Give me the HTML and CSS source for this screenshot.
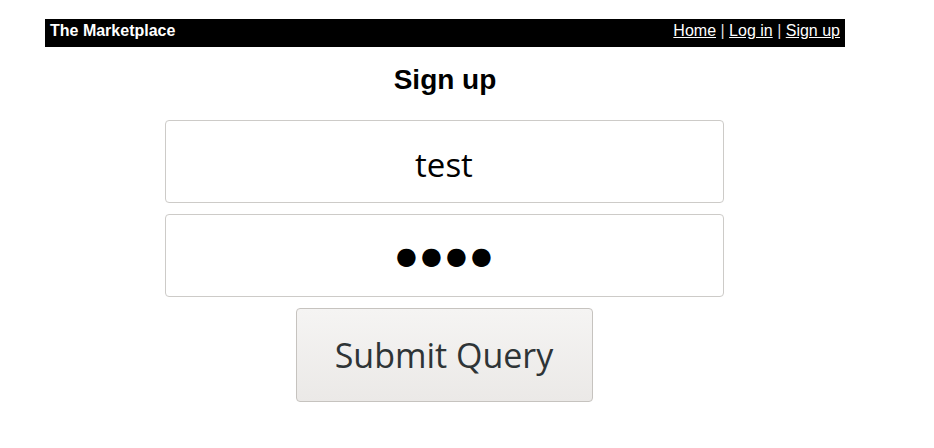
FILE: index.html
```html
<!DOCTYPE html>
<html>
<head>
<meta charset="utf-8">
<link rel="stylesheet" href="styles.css">
</head>
<body>
<div class="page">
  <div class="topbar">
    <span class="brand">The Marketplace</span>
    <nav class="nav"><a href="#">Home</a> | <a href="#">Log in</a> | <a href="#">Sign up</a></nav>
  </div>
  <h2 class="title">Sign up</h2>
  <form class="form">
    <input class="field" type="text" value="test">
    <input class="field dots" type="text" value="●●●●" readonly>
    <input class="submit" type="submit" value="Submit Query">
  </form>
</div>
</body>
</html>
```
FILE: styles.css
```css
html, body { margin: 0; padding: 0; background: #fff; }
body { font-family: "Liberation Sans", Arial, sans-serif; }
.page { width: 800px; margin: 19px 0 0 45px; }
.topbar {
  background: #000;
  color: #fff;
  height: 28px;
  box-sizing: border-box;
  display: flex;
  align-items: flex-start;
  justify-content: space-between;
  padding: 3px 5px 0;
  line-height: 18px;
}
.brand { font-weight: bold; font-size: 16px; }
.nav { font-size: 16px; color: #ddd; }
.nav a { color: #fff; text-decoration: underline; }
.title {
  text-align: center;
  font-size: 28px;
  font-weight: bold;
  margin: 17px 0 0;
  line-height: 32px;
}
.form {
  display: flex;
  flex-direction: column;
  align-items: center;
  gap: 11px;
  margin-top: 24px;
  padding-right: 2px;
}
.field {
  box-sizing: border-box;
  width: 559px;
  height: 83px;
  border: 1px solid #cdcbc8;
  border-radius: 4px;
  text-align: center;
  font-family: "Open Sans", "Noto Sans", sans-serif;
  font-size: 33px;
  color: #000;
  background: #fff;
  outline: none;
  margin: 0;
  padding: 6px 0 0;
}
.dots {
  font-family: "DejaVu Sans", sans-serif;
  font-size: 24px;
  letter-spacing: 4px;
  text-indent: 4px;
  padding-top: 1px;
}
.submit {
  box-sizing: border-box;
  width: 297px;
  height: 94px;
  border: 1px solid #c6c3bf;
  border-radius: 4px;
  background: linear-gradient(#f5f4f3, #ebe9e7);
  font-family: "Open Sans", "Noto Sans", sans-serif;
  font-size: 34px;
  color: #2e3436;
  margin: 0;
}
```
